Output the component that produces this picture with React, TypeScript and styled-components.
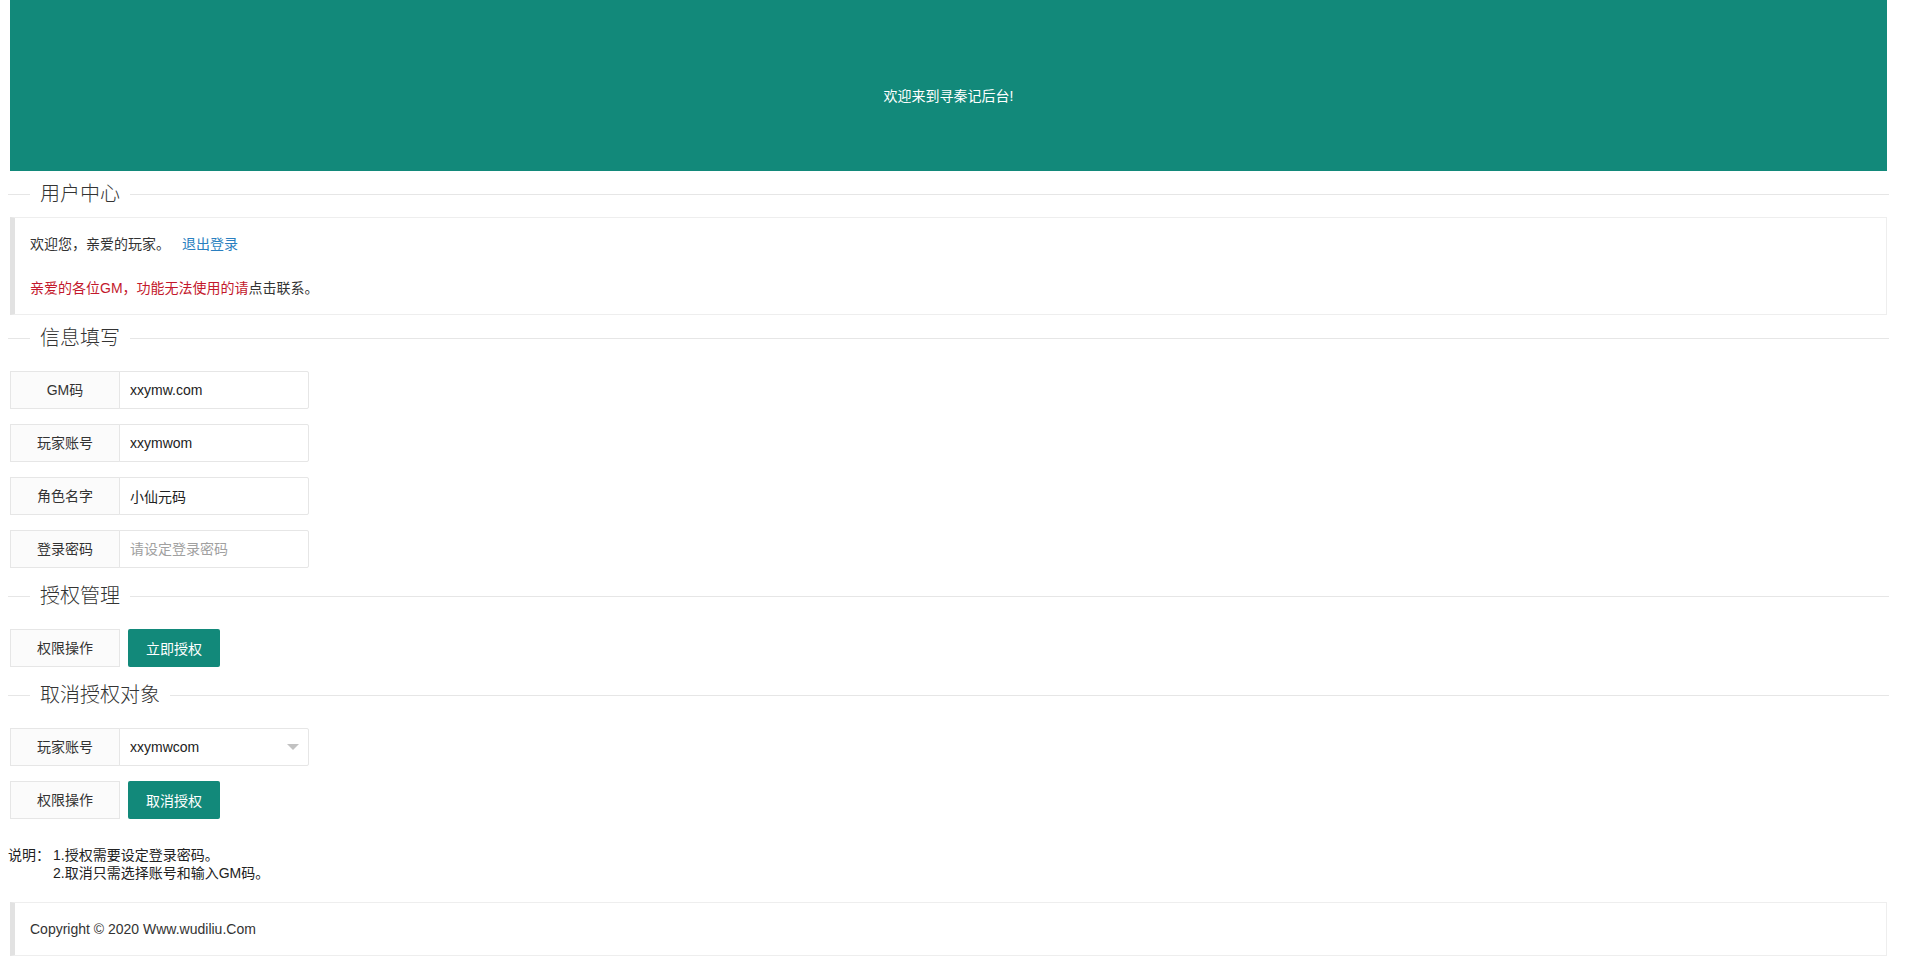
import React from 'react';
import styled, { createGlobalStyle } from 'styled-components';

const GlobalStyle = createGlobalStyle`
  html, body {
    margin: 0;
    padding: 0;
  }
  body {
    padding: 0 23px 40px 8px;
    font-family: "Liberation Sans", "Noto Sans CJK SC", sans-serif;
    font-size: 14px;
    color: #333;
    background: #fff;
  }
  * { box-sizing: border-box; }
`;

const Banner = styled.div`
  margin: 0 2px;
  height: 171px;
  padding-top: 85px;
  background: #12897a;
  color: #fff;
  text-align: center;
  font-size: 14px;
  line-height: 22px;
`;

const FieldTitle = styled.fieldset<{ $tight?: boolean }>`
  margin: 10px 0 ${p => (p.$tight ? '10px' : '20px')};
  padding: 0;
  border: none;
  border-top: 1px solid #e6e6e6;
  min-width: 0;

  legend {
    margin-left: 22px;
    padding: 0 10px;
    font-size: 20px;
    line-height: 26px;
    font-weight: 300;
    color: #333;
  }
`;

const Quote = styled.div`
  margin: 0 0 10px;
  padding: 15px;
  border-style: solid;
  border-width: 1px 1px 1px 5px;
  border-color: #eee #eee #eee #e2e2e2;
  background: #fff;
  line-height: 22px;
  font-size: 14px;
  color: #333;
`;

const Line = styled.div`
  height: 22px;
`;

const Link = styled.a<{ $gap?: boolean }>`
  color: ${p => (p.$gap ? '#2a7fc0' : '#333')};
  margin-left: ${p => (p.$gap ? '12px' : '0')};
  text-decoration: none;
  cursor: pointer;
`;

const Red = styled.span`
  color: #c3182c;
`;

const FormItem = styled.div`
  display: flex;
  margin: 0 0 15px;
  height: 38px;
`;

const Label = styled.label`
  width: 110px;
  height: 38px;
  padding: 8px 15px;
  line-height: 20px;
  text-align: center;
  background: #fbfbfb;
  border: 1px solid #e6e6e6;
  color: #333;
  font-size: 14px;
  flex-shrink: 0;
`;

const Input = styled.input`
  width: 190px;
  height: 38px;
  margin-left: -1px;
  padding: 0 10px;
  border: 1px solid #e6e6e6;
  border-radius: 0 2px 2px 0;
  font-family: inherit;
  font-size: 14px;
  color: #222;
  outline: none;
  background: #fff;

  &::placeholder {
    color: #a0a0a0;
  }
`;

const SelectBox = styled.div`
  position: relative;
  display: flex;

  &::after {
    content: '';
    position: absolute;
    right: 10px;
    top: 16px;
    border: 6px solid transparent;
    border-top-color: #c2c2c2;
  }
`;

const Button = styled.button`
  margin-left: 8px;
  height: 38px;
  padding: 0 18px;
  border: none;
  border-radius: 2px;
  background: #12897a;
  color: #fff;
  font-family: inherit;
  font-size: 14px;
  cursor: pointer;
`;

const Notes = styled.div`
  margin: 27px 0 20px;
  line-height: 18px;
  font-size: 14px;
  color: #222;
`;

const NoteRow = styled.div`
  display: flex;
`;

const NoteHead = styled.span`
  width: 45px;
  flex-shrink: 0;
`;

const Indent = styled.div`
  margin: 0 2px;
`;

const Footer = styled(Quote)`
  margin: 0 2px;
`;

const fields = [
  { label: 'GM码', value: 'xxymw.com' },
  { label: '玩家账号', value: 'xxymwom' },
  { label: '角色名字', value: '小仙元码' },
  { label: '登录密码', value: '', placeholder: '请设定登录密码' },
];

const App: React.FC = () => {
  return (
    <>
      <GlobalStyle />
      <Banner>欢迎来到寻秦记后台!</Banner>

      <FieldTitle $tight>
        <legend>用户中心</legend>
      </FieldTitle>
      <Indent>
        <Quote>
          <Line>
            欢迎您，亲爱的玩家。<Link $gap>退出登录</Link>
          </Line>
          <Line />
          <Line>
            <Red>亲爱的各位GM，功能无法使用的请</Red>
            <Link>点击联系。</Link>
          </Line>
        </Quote>
      </Indent>

      <FieldTitle>
        <legend>信息填写</legend>
      </FieldTitle>
      <Indent>
        {fields.map(f => (
          <FormItem key={f.label}>
            <Label>{f.label}</Label>
            <Input defaultValue={f.value} placeholder={f.placeholder} />
          </FormItem>
        ))}
      </Indent>

      <FieldTitle>
        <legend>授权管理</legend>
      </FieldTitle>
      <Indent>
        <FormItem>
          <Label>权限操作</Label>
          <Button>立即授权</Button>
        </FormItem>
      </Indent>

      <FieldTitle>
        <legend>取消授权对象</legend>
      </FieldTitle>
      <Indent>
        <FormItem>
          <Label>玩家账号</Label>
          <SelectBox>
            <Input readOnly defaultValue="xxymwcom" />
          </SelectBox>
        </FormItem>
        <FormItem>
          <Label>权限操作</Label>
          <Button>取消授权</Button>
        </FormItem>
      </Indent>

      <Notes>
        <NoteRow>
          <NoteHead>说明：</NoteHead>
          <span>1.授权需要设定登录密码。</span>
        </NoteRow>
        <NoteRow>
          <NoteHead />
          <span>2.取消只需选择账号和输入GM码。</span>
        </NoteRow>
      </Notes>

      <Footer>Copyright © 2020 Www.wudiliu.Com</Footer>
    </>
  );
};

export default App;
